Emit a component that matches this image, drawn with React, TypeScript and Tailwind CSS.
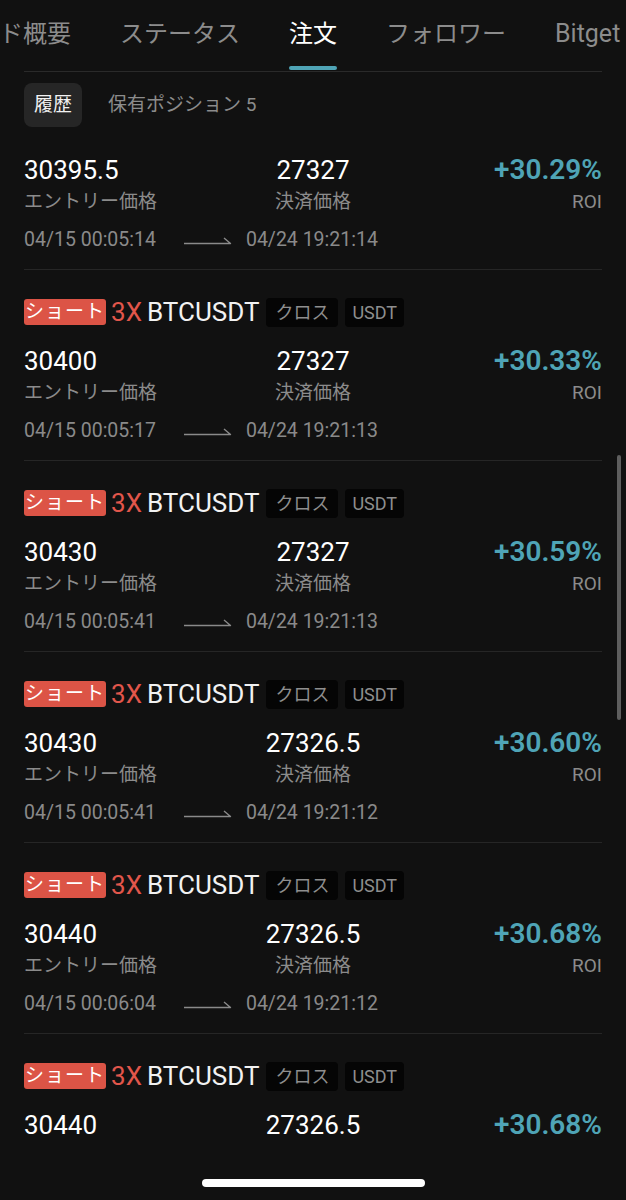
import React from 'react';

interface Trade {
  entry: string; exit: string; roi: string; open: string; close: string; header: boolean; partial?: boolean;
}

const trades: Trade[] = [
  { entry: '30395.5', exit: '27327', roi: '+30.29%', open: '04/15 00:05:14', close: '04/24 19:21:14', header: false },
  { entry: '30400', exit: '27327', roi: '+30.33%', open: '04/15 00:05:17', close: '04/24 19:21:13', header: true },
  { entry: '30430', exit: '27327', roi: '+30.59%', open: '04/15 00:05:41', close: '04/24 19:21:13', header: true },
  { entry: '30430', exit: '27326.5', roi: '+30.60%', open: '04/15 00:05:41', close: '04/24 19:21:12', header: true },
  { entry: '30440', exit: '27326.5', roi: '+30.68%', open: '04/15 00:06:04', close: '04/24 19:21:12', header: true },
  { entry: '30440', exit: '27326.5', roi: '+30.68%', open: '', close: '', header: true, partial: true },
];

const tabs = ['トレード概要', 'ステータス', '注文', 'フォロワー', 'Bitget'];

function Arrow() {
  return (
    <svg width="48" height="12" viewBox="0 0 48 12" fill="none" className="shrink-0">
      <path d="M0 9.5H46.5L40 4" stroke="#8a8a8a" strokeWidth="1.4" strokeLinejoin="round" />
    </svg>
  );
}

function TradeRow({ t }: { t: Trade }) {
  return (
    <div className={`mx-6 pt-[28px] ${t.partial ? '' : 'border-b border-[#262626] pb-[17px]'}`}>
      {t.header && (
        <div className="flex h-[28px] items-center mb-[20px]">
          <span className="h-[26px] rounded-[3px] bg-[#dc5446] px-[1px] text-[19px] leading-[26px] text-white tracking-[1px]">ショート</span>
          <span className="ml-[5px] text-[26px] leading-[28px] text-[#e2564b]">3X</span>
          <span className="ml-[5px] text-[26px] leading-[28px] text-[#f2f2f2]">BTCUSDT</span>
          <span className="ml-[7px] h-[29px] rounded-[4px] bg-[#050505] px-[9px] text-[18px] leading-[29px] text-[#8e8e8e]">クロス</span>
          <span className="ml-[7px] h-[29px] rounded-[4px] bg-[#050505] px-[7px] text-[18px] leading-[29px] text-[#8e8e8e]">USDT</span>
        </div>
      )}
      <div className="grid grid-cols-3 items-center h-[30px]">
        <span className="text-[26px] leading-[30px] text-white">{t.entry}</span>
        <span className="text-center text-[26px] leading-[30px] text-white">{t.exit}</span>
        <span className="text-right text-[28px] font-semibold leading-[30px] text-[#4fa4b6]">{t.roi}</span>
      </div>
      {!t.partial && (
        <>
          <div className="mt-[4px] grid grid-cols-3 text-[19px] leading-[26px] text-[#8b8b8b]">
            <span>エントリー価格</span>
            <span className="text-center">決済価格</span>
            <span className="text-right">ROI</span>
          </div>
          <div className="mt-[13px] flex items-center text-[19.5px] leading-[24px] text-[#8a8a8a]">
            <span>{t.open}</span>
            <span className="ml-[28px]"><Arrow /></span>
            <span className="ml-[14px]">{t.close}</span>
          </div>
        </>
      )}
    </div>
  );
}

export default function App() {
  return (
    <div className="relative h-[1200px] w-[626px] overflow-hidden bg-[#111111] font-['Roboto','Noto_Sans_CJK_JP',sans-serif]">
      <div className="flex h-[71px] items-stretch gap-[49px] whitespace-nowrap -ml-[73px]">
        {tabs.map(tab => (
          <div key={tab} className="flex flex-col items-center">
            <span className={`pt-[17px] leading-[34px] ${tab === 'Bitget' ? 'text-[25px]' : 'text-[24px]'} ${tab === '注文' ? 'text-white' : 'text-[#8c8c8c]'}`}>{tab}</span>
            <span className={`mt-auto mb-[1px] h-[4px] w-[48px] rounded-full ${tab === '注文' ? 'bg-[#4fa4b6]' : 'bg-transparent'}`} />
          </div>
        ))}
      </div>
      <div className="mx-6 h-px bg-[#2a2a2a]" />

      <div className="mt-[11px] flex items-center px-6">
        <span className="flex h-[44px] items-center rounded-lg bg-[#262626] px-[10px] text-[19px] text-[#f2f2f2]">履歴</span>
        <span className="ml-[26px] text-[19px] text-[#8c8c8c]">保有ポジション 5</span>
      </div>

      <div>
        {trades.map((t, i) => (
          <TradeRow key={i} t={t} />
        ))}
      </div>

      <div className="absolute right-[5px] top-[455px] h-[265px] w-[4px] rounded-full bg-[#5e5e5e]" />
      <div className="absolute inset-x-0 bottom-0 flex h-[56px] items-end justify-center bg-[#111111] pb-[13px]">
        <div className="h-[8px] w-[223px] rounded-full bg-white" />
      </div>
    </div>
  );
}
